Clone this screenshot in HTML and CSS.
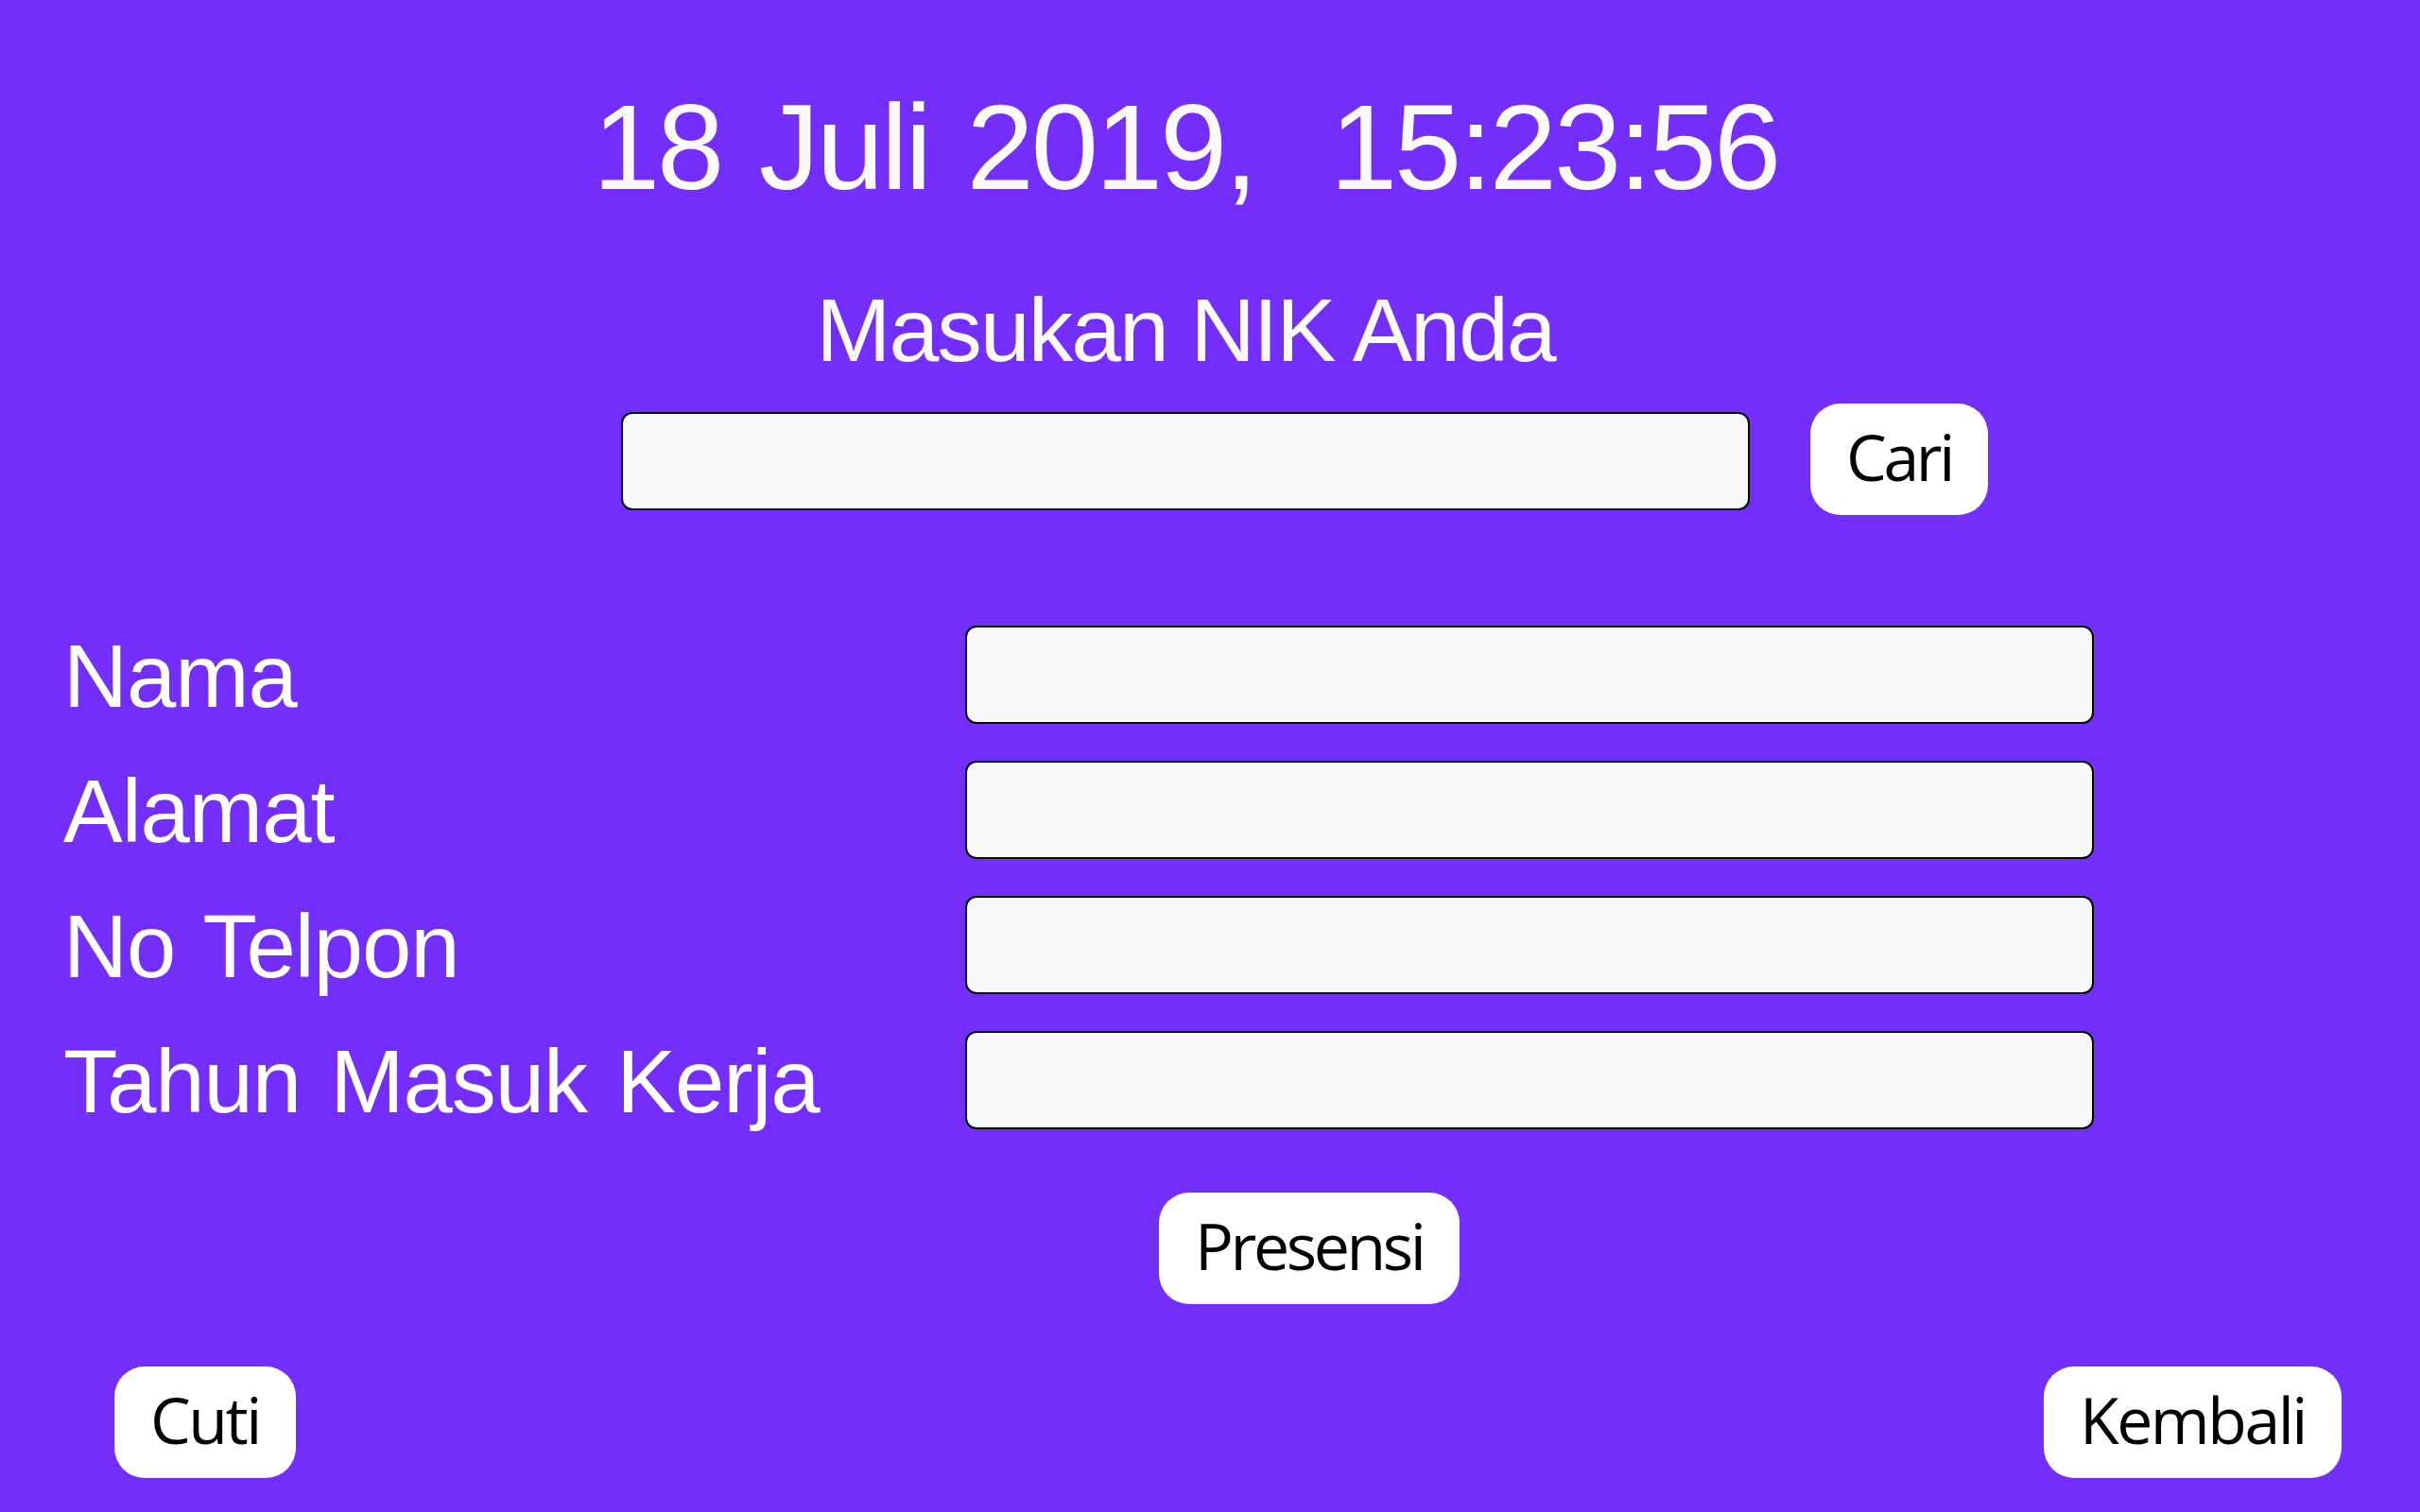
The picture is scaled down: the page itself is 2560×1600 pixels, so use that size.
FILE: index.html
```html
<!DOCTYPE html>
<html lang="id">
<head>
<meta charset="utf-8">
<title>Presensi</title>
<link rel="stylesheet" href="styles.css">
</head>
<body>
<main class="screen">
  <header class="top">
    <h1 class="clock">18 Juli 2019,&nbsp; 15:23:56</h1>
    <h2 class="prompt">Masukan NIK Anda</h2>
  </header>

  <div class="search">
    <input class="field field-nik" type="text" aria-label="NIK">
    <button class="btn btn-tight" type="button">Cari</button>
  </div>

  <form class="details">
    <div class="row"><label class="label">Nama</label><input class="field" type="text"></div>
    <div class="row"><label class="label">Alamat</label><input class="field" type="text"></div>
    <div class="row"><label class="label">No Telpon</label><input class="field" type="text"></div>
    <div class="row"><label class="label">Tahun Masuk Kerja</label><input class="field" type="text"></div>
  </form>

  <div class="actions">
    <button class="btn btn-tight" type="button">Presensi</button>
  </div>

  <footer class="bottom">
    <button class="btn" type="button">Cuti</button>
    <button class="btn" type="button">Kembali</button>
  </footer>
</main>
</body>
</html>
```
FILE: styles.css
```css
* { box-sizing: border-box; }

html, body {
  margin: 0;
  padding: 0;
}

body {
  background: #742ef9;
  width: 2560px;
  height: 1600px;
  overflow: hidden;
  font-family: "Liberation Sans", Arial, sans-serif;
  color: #fafafa;
}

.screen {
  display: flex;
  flex-direction: column;
  height: 1600px;
}

.top {
  display: flex;
  flex-direction: column;
  align-items: center;
  padding-top: 92px;
  padding-right: 52px;
}

.clock {
  margin: 0;
  font-weight: normal;
  font-size: 128px;
  line-height: 128px;
  letter-spacing: -3px;
  word-spacing: 7px;
  white-space: pre;
}

.prompt {
  margin: 82px 0 0;
  font-weight: normal;
  font-size: 95px;
  line-height: 95px;
  letter-spacing: -2px;
}

.search {
  display: flex;
  align-items: center;
  margin-top: 29px;
  padding-left: 657px;
  gap: 64px;
  height: 119px;
}

.field {
  display: block;
  height: 104px;
  background: #f9f9f9;
  border: 2px solid #000;
  border-radius: 12px;
  outline: none;
  padding: 0 20px;
  font-size: 40px;
}

.field-nik {
  width: 1194px;
  height: 104px;
  margin-top: 4px;
}

.details {
  display: flex;
  flex-direction: column;
  gap: 39px;
  margin: 117px 0 0;
}

.row {
  display: flex;
  align-items: center;
  padding-left: 67px;
}

.row .field {
  width: 1194px;
  margin-left: auto;
  margin-right: 345px;
}

.label {
  font-size: 94px;
  line-height: 94px;
  letter-spacing: -1px;
  word-spacing: 6px;
  color: #ffffff;
  position: relative;
  top: 2px;
}

.btn {
  height: 118px;
  padding: 0 38px 6px;
  background: #ffffff;
  border: none;
  border-radius: 32px;
  color: #000;
  font-family: "Open Sans", "Noto Sans", sans-serif;
  font-size: 68px;
  line-height: 68px;
  letter-spacing: -2.5px;
  cursor: pointer;
}

.btn-tight {
  letter-spacing: -3.4px;
}

.actions {
  display: flex;
  margin-top: 67px;
  padding-left: 1226px;
}

.bottom {
  display: flex;
  justify-content: space-between;
  margin-top: 66px;
  padding: 0 83px 0 121px;
}
```
